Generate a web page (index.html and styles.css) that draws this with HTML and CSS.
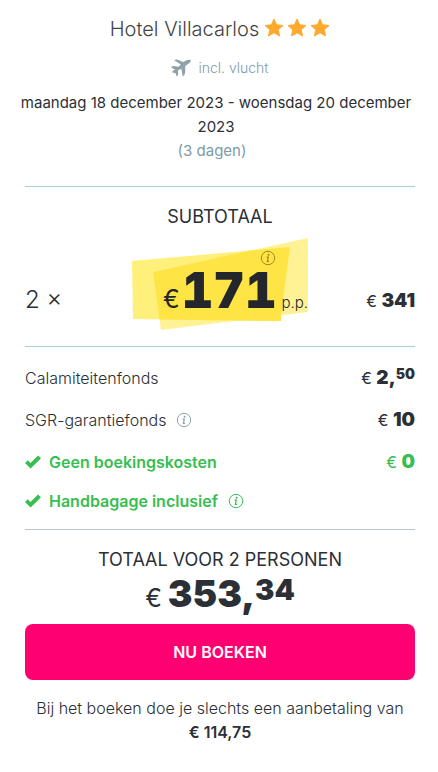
FILE: index.html
```html
<!DOCTYPE html>
<html lang="nl">
<head>
<meta charset="utf-8">
<meta name="viewport" content="width=device-width, initial-scale=1">
<title>Hotel Villacarlos</title>
<link rel="stylesheet" href="styles.css">
</head>
<body>
<svg class="symbols" aria-hidden="true">
  <symbol id="star" viewBox="0 0 20 20"><path d="M10 1l2.6 5.8 6.4.7-4.8 4.2 1.4 6.3-5.6-3.2L4.4 18l1.4-6.3L1 7.5l6.4-.7z" fill="currentColor" stroke="currentColor" stroke-width="1" stroke-linejoin="round"/></symbol>
  <symbol id="info" viewBox="0 0 16 16"><circle cx="8" cy="8" r="6.7" fill="none" stroke="currentColor"/><circle cx="8.6" cy="4.8" r="1" fill="currentColor"/><path d="M6.6 7.2h1.7l-.9 4.1h1.6" fill="none" stroke="currentColor" stroke-width="1.2"/></symbol>
  <symbol id="check" viewBox="0 0 16 14"><path d="M0 8l2.8-2.7 2.7 2.6L13 .6 16 3.3 5.6 13.5z" fill="currentColor"/></symbol>
</svg>
<main class="booking">
  <header class="trip">
    <h1 class="hotel">Hotel Villacarlos
      <span class="stars" role="img" aria-label="3 sterren"><svg><use href="#star"/></svg><svg><use href="#star"/></svg><svg><use href="#star"/></svg></span>
    </h1>
    <p class="flight">
      <svg viewBox="0 0 20 18" aria-hidden="true"><path d="M3.2 1.3C3.8.5 4.8.2 6 .5l6.200 2.400 2.900-1.500c1.900-1 4.300-.9 4.700.1.400 1.100-1.200 2.600-2.700 3.500l-2.700 1.700-.3 6.600c-.1 1.600-.9 3.500-2.300 4.200l-1.500-7.700-3.400 1.600.2 2.700c.1 1.300-.4 2.600-1.400 3.400L4.600 14.200 1 13.300c.5-1.300 1.500-2 2.700-2.300l.6-.2L.2 8.600C.6 7.500 1.600 6.900 3 7l4.400.7 2.500-2.200z" fill="currentColor"/></svg>
      <span>incl. vlucht</span>
    </p>
    <p class="dates">maandag 18 december 2023 - woensdag 20 december 2023</p>
    <p class="duration">(3 dagen)</p>
  </header>

  <section class="subtotal">
    <h2 class="heading">SUBTOTAAL</h2>
    <div class="sum">
      <span class="count">2 ×</span>
      <div class="highlight">
        <svg class="marker" viewBox="0 0 176 92" preserveAspectRatio="none" aria-hidden="true">
          <path d="M0 23L158 9l-9 74L1 81z" fill="#fff07c"/>
          <path d="M21 34L176 0v74L29 92z" fill="#fff294"/>
          <path d="M21 34L118 12.500 158 9l-9 68.300V83L27.500 81.400z" fill="#ffe445"/>
        </svg>
        <svg class="info info-price" role="img" aria-label="Informatie"><use href="#info"/></svg>
        <p class="per-person"><span class="euro">€</span><strong>171</strong><span class="pp">p.p.</span></p>
      </div>
      <span class="amount">€ <strong>341</strong></span>
    </div>
  </section>

  <ul class="costs">
    <li><span class="label">Calamiteitenfonds</span><span class="amount">€ <strong>2,<sup>50</sup></strong></span></li>
    <li><span class="label">SGR-garantiefonds <svg class="info" role="img" aria-label="Informatie"><use href="#info"/></svg></span><span class="amount">€ <strong>10</strong></span></li>
    <li class="included"><span class="label"><svg class="check" aria-hidden="true"><use href="#check"/></svg>Geen boekingskosten</span><span class="amount">€ <strong>0</strong></span></li>
    <li class="included"><span class="label"><svg class="check" aria-hidden="true"><use href="#check"/></svg>Handbagage inclusief <svg class="info" role="img" aria-label="Informatie"><use href="#info"/></svg></span></li>
  </ul>

  <section class="total">
    <h2 class="heading">TOTAAL VOOR 2 PERSONEN</h2>
    <p class="total-price"><span class="euro">€</span><strong>353,<sup>34</sup></strong></p>
    <button class="book" type="button">NU BOEKEN</button>
    <p class="deposit">Bij het boeken doe je slechts een aanbetaling van <strong>€ 114,75</strong></p>
  </section>
</main>
</body>
</html>
```
FILE: styles.css
```css
* { box-sizing: border-box; }
body {
  margin: 0;
  background: #fff;
  color: #2b2f36;
  font: 400 16px/24px Inter, "Liberation Sans", sans-serif;
}
h1, h2, p, ul { margin: 0; padding: 0; }
.symbols { position: absolute; width: 0; height: 0; }
.booking { padding: 16px 23px 24px 25px; }

.trip {
  margin: 0 -10px;
  padding-bottom: 23px;
  text-align: center;
}
.hotel {
  display: flex;
  justify-content: center;
  align-items: center;
  gap: 5px;
  color: #444;
  font-size: 20px;
  font-weight: 300;
  line-height: 26px;
}
.stars { display: flex; gap: 3px; color: #ffa92e; margin-top: -3px; }
.stars svg { width: 20px; height: 20px; }
.flight {
  display: flex;
  justify-content: center;
  align-items: center;
  gap: 7px;
  margin: 14px 0 11px;
  color: #7d9ba9;
  font-size: 14px;
  font-weight: 300;
}
.flight svg { width: 20px; height: 18px; color: #8fa2a9; }
.dates, .duration { margin: 0 -8px; padding-right: 8px; font-size: 15px; }
.duration { padding-right: 16px; color: #7d9ba9; }

.subtotal {
  border-top: 1px solid #a9d3e0;
  border-bottom: 1px solid #a9d3e0;
  padding: 18px 0 16px;
}
.heading {
  font-size: 18px;
  font-weight: 400;
  line-height: 24px;
  text-align: center;
}
.sum {
  display: grid;
  grid-template-columns: 1fr 176px 1fr;
  margin-top: 9px;
  align-items: center;
}
.count { padding-top: 32px; font-size: 24px; font-weight: 300; }
.sum > .amount { padding-top: 34px; text-align: right; }
.highlight { position: relative; height: 92px; color: #23272b; }
.marker { position: absolute; inset: 0; width: 100%; height: 100%; }
.info { width: 16px; height: 16px; color: #8fa2a9; }
.info-price { position: absolute; top: 12px; left: 128px; color: #a08b16; }
.per-person {
  position: relative;
  display: flex;
  align-items: baseline;
  justify-content: flex-end;
  padding-top: 25px;
  line-height: 56px;
}
.per-person strong {
  margin: 0 5px 0 2px;
  font-size: 49px;
  font-weight: 900;
  font-variant-numeric: tabular-nums;
}
.euro { font-size: 25px; font-weight: 400; }
.pp { font-size: 15px; font-weight: 300; }

.amount { font-size: 16px; font-weight: 400; white-space: nowrap; }
.amount strong { font-size: 19px; font-weight: 900; }
.amount sup { font-size: 14px; }
sup { line-height: 0; vertical-align: 5px; }

.costs { list-style: none; padding: 19px 0 16px; border-bottom: 1px solid #b5c8cd; }
.costs li {
  display: flex;
  justify-content: space-between;
  align-items: center;
  margin-bottom: 18px;
}
.costs li:last-child { margin-bottom: 0; }
.label { display: flex; align-items: center; font-weight: 300; }
.label .info { margin-left: 10px; }
.check { width: 16px; height: 14px; margin-right: 8px; }
.costs .included { margin-bottom: 15px; color: #37be51; }
.costs .included:last-child { margin-bottom: 0; }
.included .label { font-weight: 600; }
.included .info { color: inherit; }

.total { padding-top: 18px; text-align: center; }
.total-price { display: flex; justify-content: center; align-items: baseline; line-height: 44px; }
.total-price strong { margin-left: 6px; font-size: 37px; font-weight: 900; }
.total-price sup { font-size: 29px; vertical-align: 7px; }
.book {
  display: block;
  width: 100%;
  margin: 4px 0 16px;
  padding: 16px;
  border: 0;
  border-radius: 8px;
  background: #ff0070;
  color: #fff;
  font: 600 16px/24px Inter, "Liberation Sans", sans-serif;
}
.deposit { font-weight: 300; }
.deposit strong { display: block; font-weight: 600; }
```
